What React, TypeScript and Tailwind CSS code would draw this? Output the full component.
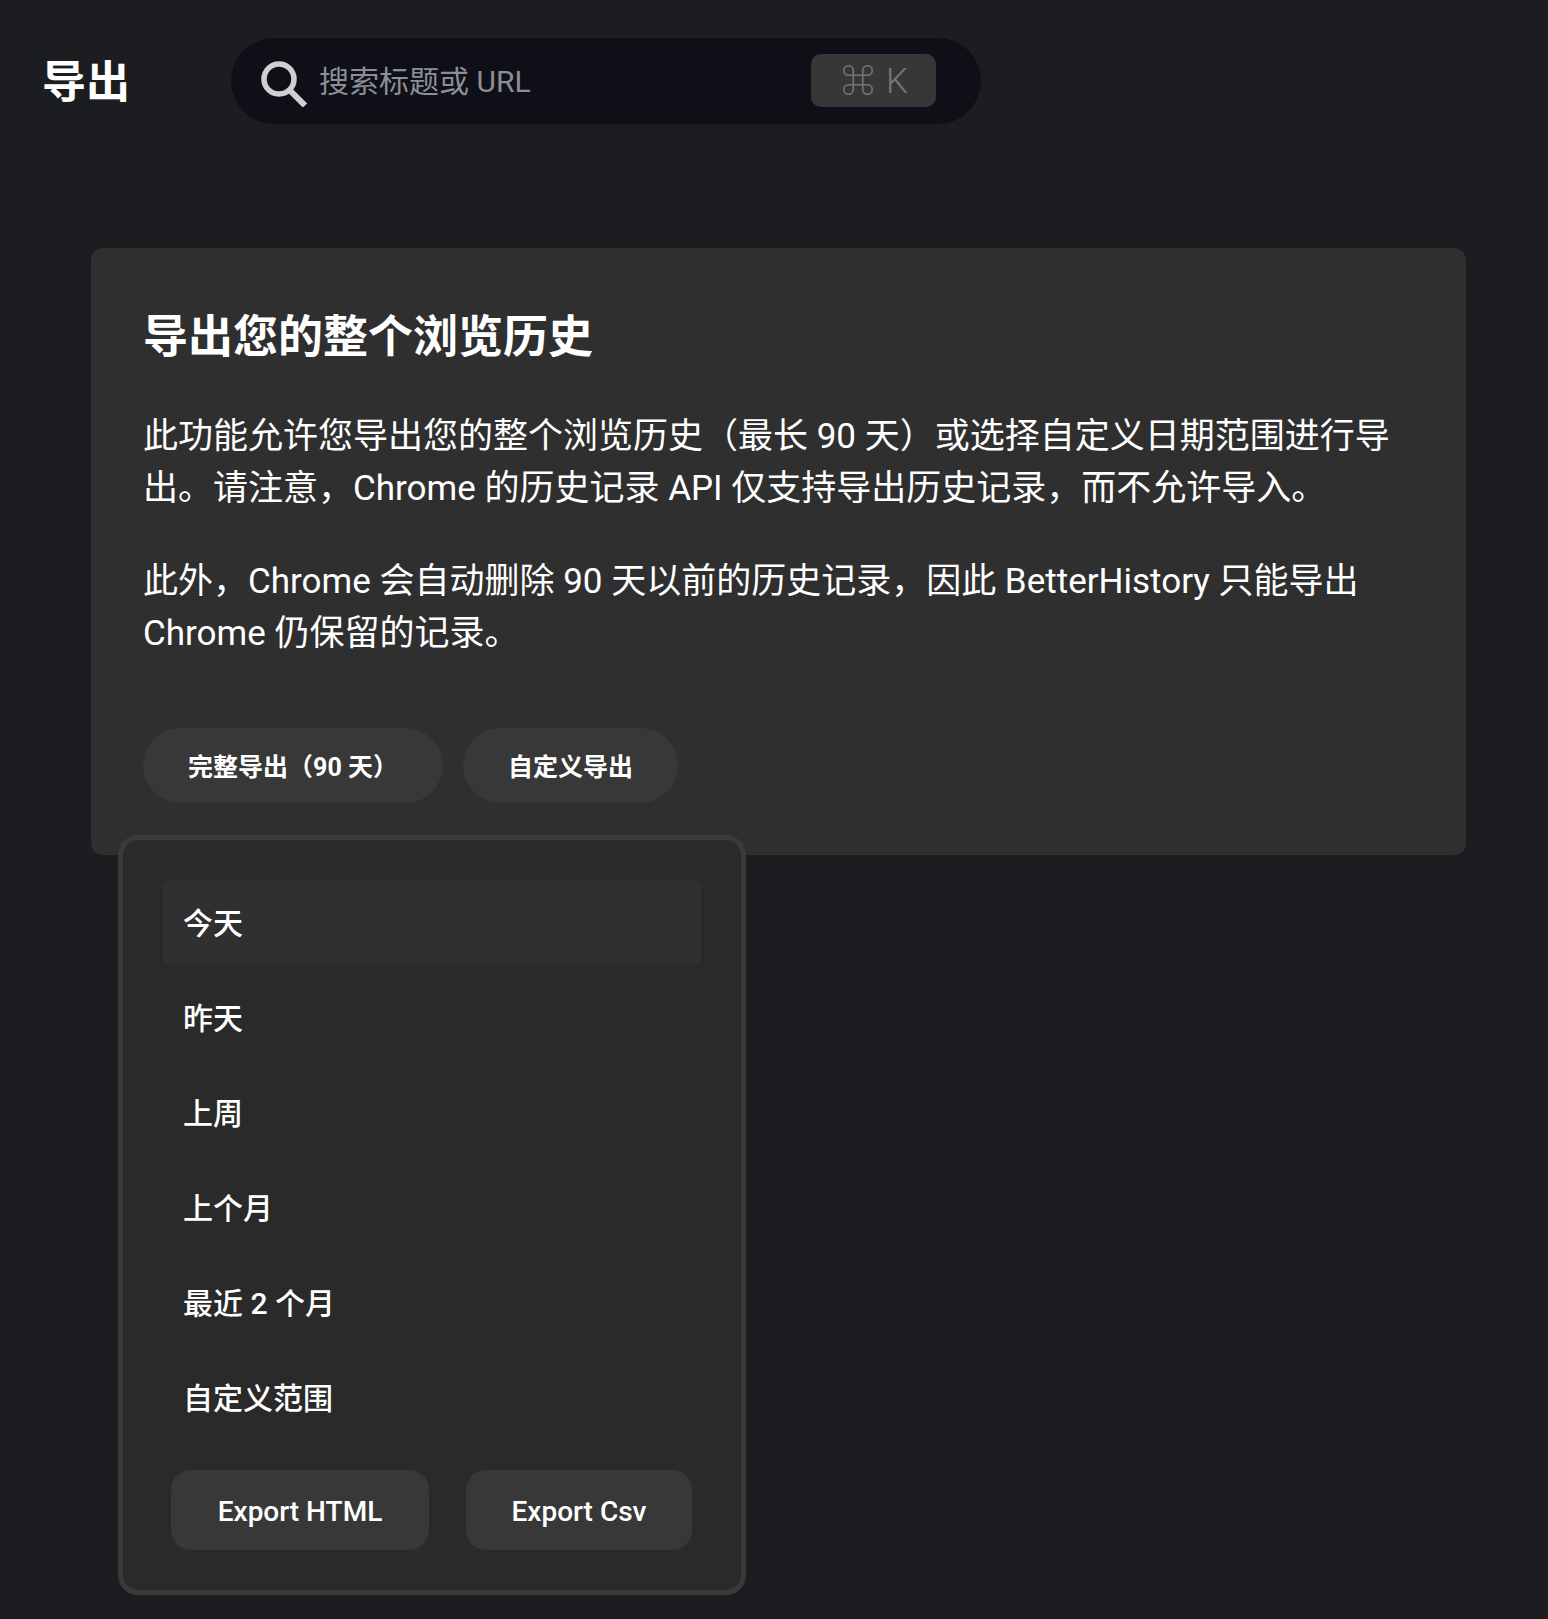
import { Command } from "lucide-react";

const ranges = ["今天", "昨天", "上周", "上个月", "最近 2 个月", "自定义范围"];

function SearchIcon() {
  return (
    <svg viewBox="0 0 46 46" className="w-[46px] h-[46px] shrink-0 mt-[6px]" fill="none" stroke="#cfcfd2" strokeWidth="5.5">
      <circle cx="18" cy="18" r="15" />
      <path d="M28.5 29 L44 44.5" strokeWidth="6" />
    </svg>
  );
}

export default function App() {
  return (
    <div className="min-h-[1619px] bg-[#1c1d21] text-white font-['Roboto','Noto_Sans_CJK_SC',sans-serif]">
      {/* header */}
      <header className="flex items-center pt-[38px] pl-[42px]">
        <h1 className="w-[189px] h-[86px] pt-[2px] text-[44px] font-bold leading-[86px]">导出</h1>
        <div className="flex items-center w-[750px] h-[86px] rounded-full bg-[#0f1017] pl-[30px] pr-[45px]">
          <SearchIcon />
          <span className="ml-[12px] flex-1 text-[30px] text-[#8c8e97]">搜索标题或 URL</span>
          <kbd className="flex items-center justify-center gap-[9px] w-[125px] h-[53px] rounded-[10px] bg-[#373737] text-[35px] text-[#767676] -mt-[1px] font-['Roboto',sans-serif] font-light">
            <Command aria-label="⌘" size={38} strokeWidth={1} className="mb-[2px]" />
            <span className="mt-[4px]">K</span>
          </kbd>
        </div>
      </header>

      <main className="relative mt-[124px] w-[1375px] ml-[91px]">
        <section className="h-[607px] rounded-xl bg-[#2f2f2f] px-[52px] pt-[54px]">
          <h2 className="text-[45px] font-bold leading-[72px]">导出您的整个浏览历史</h2>
          <p className="mt-[37px] text-[35px] leading-[52px]">
            此功能允许您导出您的整个浏览历史（最长 90 天）或选择自定义日期范围进行导出。请注意，Chrome 的历史记录 API 仅支持导出历史记录，而不允许导入。
          </p>
          <p className="mt-[41px] text-[35px] leading-[52px]">
            此外，Chrome 会自动删除 90 天以前的历史记录，因此 BetterHistory 只能导出 Chrome 仍保留的记录。
          </p>
          <div className="flex gap-[20px] mt-[68px]">
            <button className="w-[300px] h-[75px] rounded-full bg-[#383838] text-[25px] font-bold pt-[5px]">完整导出（90 天）</button>
            <button className="w-[215px] h-[75px] rounded-full bg-[#383838] text-[25px] font-bold pt-[5px]">自定义导出</button>
          </div>
        </section>

        {/* date range popover */}
        <div className="absolute left-[27px] top-[587px] w-[628px] h-[760px] rounded-[20px] border-[5px] border-[#3a3a3a] bg-[#2a2a2a] pt-[40px] px-[40px]">
          <ul className="flex flex-col gap-[10px]">
            {ranges.map((label, i) => (
              <li
                key={label}
                className={`flex items-center h-[85px] rounded-lg px-[20px] pt-[2px] text-[30px] font-medium ${i === 0 ? "bg-[#303030]" : ""}`}
              >
                {label}
              </li>
            ))}
          </ul>
          <div className="flex gap-[37px] mt-[30px] ml-[8px]">
            <button className="w-[258px] h-[80px] rounded-[20px] bg-[#383838] text-[28px] font-medium pt-[4px]">Export HTML</button>
            <button className="w-[226px] h-[80px] rounded-[20px] bg-[#383838] text-[28px] font-medium pt-[4px]">Export Csv</button>
          </div>
        </div>
      </main>
    </div>
  );
}
